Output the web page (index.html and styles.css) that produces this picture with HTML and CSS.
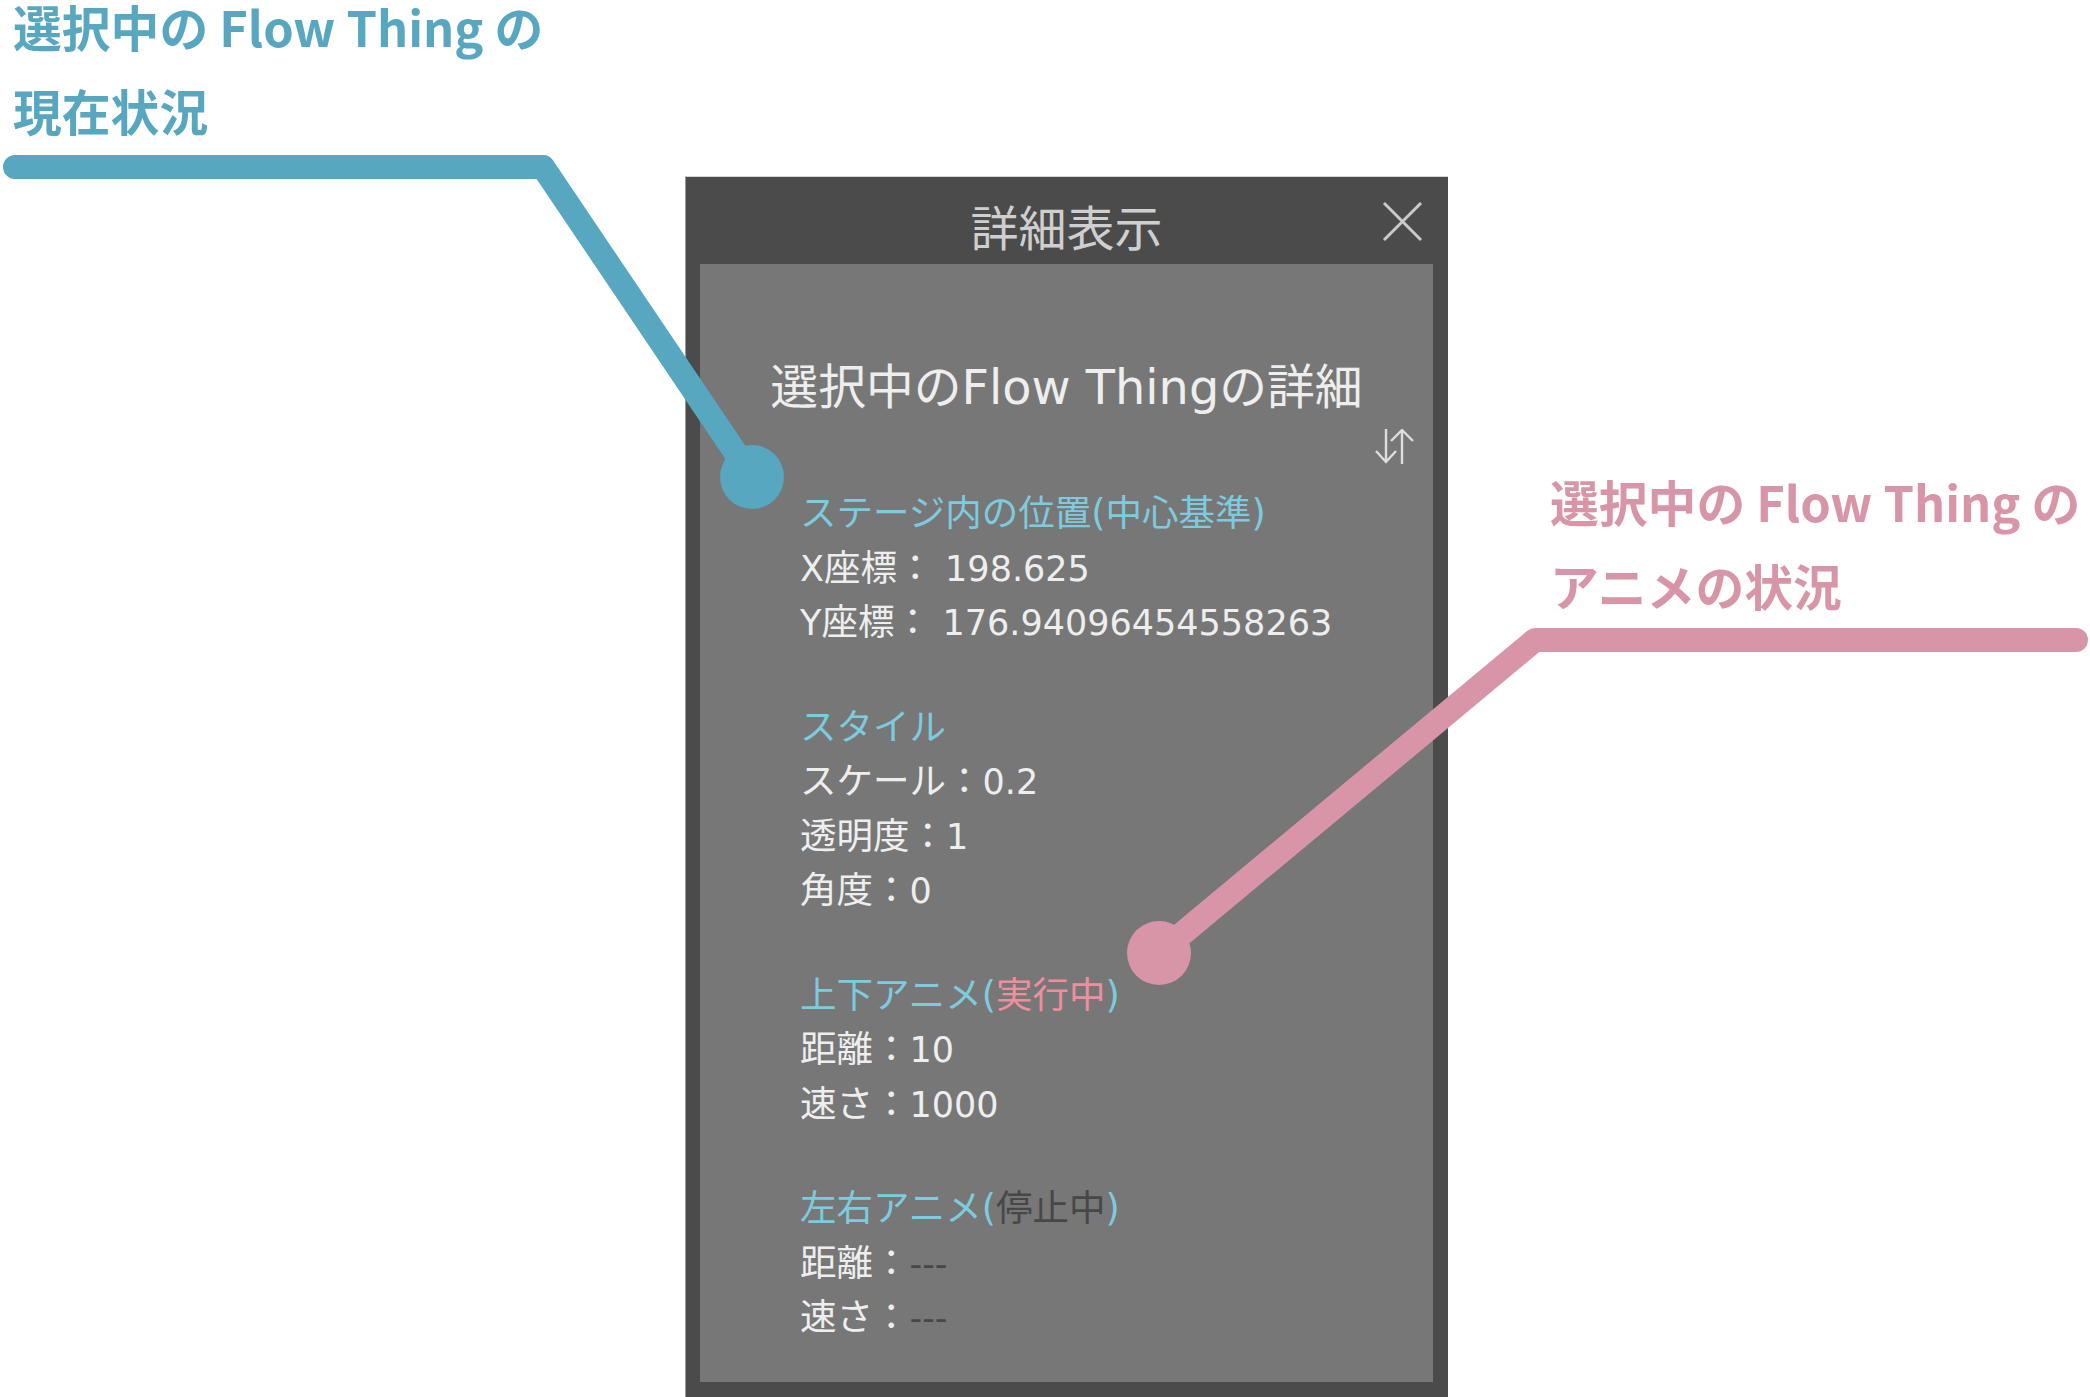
FILE: index.html
```html
<!DOCTYPE html>
<html lang="ja">
<head>
<meta charset="utf-8">
<title>詳細表示</title>
<link rel="stylesheet" href="styles.css">
</head>
<body>
<div class="page">
  <div class="callout callout-blue">
    <div class="callout-line">選択中の Flow Thing の</div>
    <div class="callout-line">現在状況</div>
  </div>
  <div class="callout callout-pink">
    <div class="callout-line">選択中の Flow Thing の</div>
    <div class="callout-line">アニメの状況</div>
  </div>

  <div class="panel">
    <div class="panel-header">
      <span class="panel-title">詳細表示</span>
      <svg class="close" viewBox="0 0 41 41" width="41" height="41"><path d="M2 2 L39 39 M39 2 L2 39"/></svg>
    </div>
    <div class="panel-body">
      <div class="subtitle">選択中のFlow Thingの詳細</div>
      <div class="sort-row">
        <svg class="sort" viewBox="0 0 40 36" width="40" height="36"><path d="M11 0 V33 M1 22 L11 33 L21 22 M27 35 V1 M16 12 L27 1 L38 12"/></svg>
      </div>
      <div class="sections">
        <div class="section">
          <div class="line head">ステージ内の位置(中心基準)</div>
          <div class="line"><span class="val">X</span>座標： <span class="val">198.625</span></div>
          <div class="line"><span class="val">Y</span>座標： <span class="val">176.94096454558263</span></div>
        </div>
        <div class="section">
          <div class="line head">スタイル</div>
          <div class="line">スケール：<span class="val">0.2</span></div>
          <div class="line">透明度：<span class="val">1</span></div>
          <div class="line">角度：<span class="val">0</span></div>
        </div>
        <div class="section">
          <div class="line head">上下アニメ(<span class="running">実行中</span>)</div>
          <div class="line">距離：<span class="val">10</span></div>
          <div class="line">速さ：<span class="val">1000</span></div>
        </div>
        <div class="section">
          <div class="line head">左右アニメ(<span class="stopped">停止中</span>)</div>
          <div class="line">距離：<span class="val stopped">---</span></div>
          <div class="line">速さ：<span class="val stopped">---</span></div>
        </div>
      </div>
    </div>
  </div>

  <svg class="leaders" width="2090" height="1397" viewBox="0 0 2090 1397">
    <path class="leader-blue" d="M15 167 L543 167 L752 477"/>
    <circle class="dot-blue" cx="752" cy="477" r="32"/>
    <path class="leader-pink" d="M2076 640 L1535 640 L1159 953"/>
    <circle class="dot-pink" cx="1159" cy="953" r="32"/>
  </svg>
</div>
</body>
</html>
```
FILE: styles.css
```css
html, body {
  margin: 0;
  padding: 0;
  background: #ffffff;
}

.page {
  position: relative;
  width: 2090px;
  height: 1397px;
  overflow: hidden;
  padding-top: 176px;
  box-sizing: border-box;
}

.callout {
  position: absolute;
  font-family: "Noto Sans CJK JP", sans-serif;
  font-weight: 700;
  font-size: 48.8px;
  white-space: nowrap;
  z-index: 3;
}

.callout-line {
  line-height: 58px;
}

.callout-line + .callout-line {
  margin-top: 26px;
}

.callout-blue {
  left: 13px;
  top: -3px;
  color: #56a7bf;
}

.callout-pink {
  left: 1550px;
  top: 472px;
  color: #d995a8;
}

.panel {
  margin-left: 685px;
  width: 763px;
  height: 1221px;
  background: #4b4b4b;
  box-sizing: border-box;
  padding: 0 15px 15px;
  display: flex;
  flex-direction: column;
  border-top: 1px solid #d6d6d6;
  border-left: 1px solid #9a9a9a;
}

.panel-header {
  position: relative;
  height: 87px;
  box-sizing: border-box;
  padding-top: 13px;
  text-align: center;
  margin: 0 -15px 0 -16px;
}

.panel-title {
  font-family: "Noto Sans CJK JP", sans-serif;
  font-size: 48px;
  line-height: 70px;
  color: #cfcfcf;
}

.close {
  position: absolute;
  right: 25px;
  top: 24px;
  fill: none;
  stroke: #cacaca;
  stroke-width: 3;
}

.panel-body {
  flex: 1;
  margin-left: -1px;
  background: #777777;
  padding: 94px 18px 0;
  font-family: "DejaVu Sans", "Noto Sans CJK JP", sans-serif;
  color: #eeeeee;
}

.subtitle {
  text-align: center;
  font-size: 47.8px;
  line-height: 60px;
  color: #eeeeee;
  white-space: nowrap;
}

.sort-row {
  display: flex;
  justify-content: flex-end;
  margin-top: 11px;
  height: 36px;
}

.sort {
  fill: none;
  stroke: #dedede;
  stroke-width: 2.4;
}

.sections {
  padding-left: 82px;
  margin-top: 22px;
  display: flex;
  flex-direction: column;
  gap: 50px;
}

.line {
  font-size: 36.5px;
  line-height: 54.5px;
  height: 54.5px;
  white-space: nowrap;
}

.val {
  font-size: 35px;
}

.head {
  color: #7dcbde;
}

.running {
  color: #ee8e9e;
}

.stopped {
  color: #474747;
}

.leaders {
  position: absolute;
  left: 0;
  top: 0;
  z-index: 2;
  pointer-events: none;
}

.leader-blue, .leader-pink {
  fill: none;
  stroke-width: 24;
  stroke-linecap: round;
  stroke-linejoin: round;
}

.leader-blue { stroke: #56a7bf; }
.leader-pink { stroke: #d995a8; }
.dot-blue { fill: #56a7bf; }
.dot-pink { fill: #d995a8; }
```
